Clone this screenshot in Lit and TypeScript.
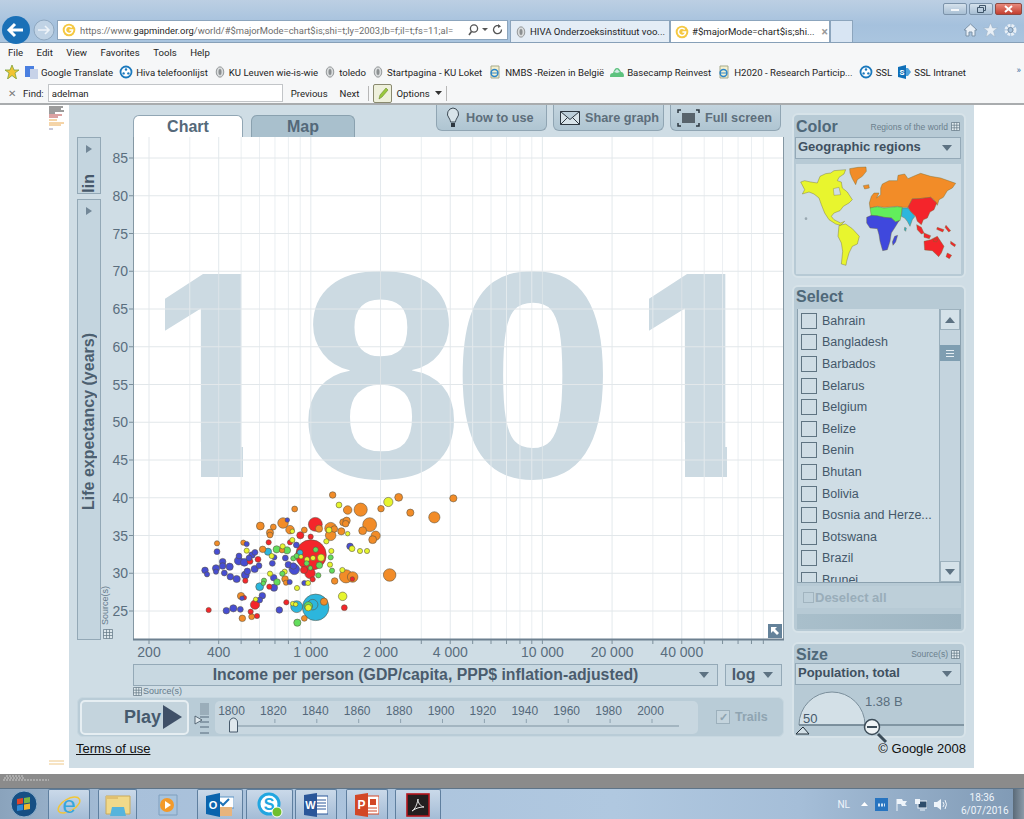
// @ts-nocheck
import {html, css, svg, LitElement} from 'lit';
import {customElement} from 'lit/decorators.js';

const BUBBLE_COLORS = {o: '#f28c28', r: '#f4252b', b: '#474ed2', y: '#e6f52e', g: '#62dd5c', c: '#2cb6dd'};

// traced in 3x zoom coordinates of the crop at (180,480)
const RAW = {
  o: [[458,45,8],[656,52,10],[820,55,9],[603,86,8],[542,89,18],[503,90,11],[691,98,9],[763,112,15],[344,87,7],[569,134,19],[309,129,14],[241,138,10],[280,141,7],[330,149,11],[373,150,7],[270,158,9],[270,165,7],[452,145,16],[463,147,8],[417,146,9],[484,154,9],[490,127,9],[500,122,9],[497,131,8],[548,152,10],[587,167,12],[578,179,10],[452,166,14],[190,188,6],[248,208,8],[306,211,6],[111,190,6],[629,285,17],[498,289,18],[518,291,14],[464,303,8],[315,297,8],[318,308,6],[183,348,9],[187,415,8],[215,410,7],[373,415,7],[432,365,9]],
  r: [[406,133,19],[361,166,9],[392,170,6],[330,187,6],[266,187,6],[393,225,44],[234,238,7],[210,244,7],[372,270,9],[390,280,14],[398,298,6],[196,302,6],[268,320,6],[225,374,12],[193,353,5],[212,395,6],[231,408,6],[86,390,6],[319,367,6],[493,383,7],[517,297,5]],
  b: [[322,120,5],[200,192,6],[111,215,7],[225,217,7],[216,225,8],[207,234,7],[177,228,7],[176,242,11],[193,247,10],[128,245,8],[128,258,8],[108,265,9],[108,275,6],[75,271,8],[81,283,6],[133,279,7],[149,260,9],[151,290,8],[170,297,9],[202,274,8],[196,285,10],[224,267,9],[237,257,7],[277,250,7],[283,232,6],[316,234,7],[349,195,7],[325,254,8],[343,268,14],[340,258,8],[281,293,8],[282,323,9],[329,306,6],[373,309,6],[247,347,8],[239,360,7],[139,392,8],[160,385,9],[181,388,7],[298,390,8],[510,199,8],[186,355,5]],
  y: [[477,75,7],[625,66,12],[337,154,5],[447,150,7],[503,161,5],[439,184,6],[337,180,6],[516,206,7],[540,213,6],[561,213,6],[454,213,6],[200,212,6],[275,228,6],[308,199,6],[363,230,5],[399,234,6],[423,233,9],[381,238,6],[450,254,6],[487,270,6],[270,281,6],[314,275,6],[351,324,6],[384,309,6],[488,349,11],[338,371,5],[347,373,5],[385,383,8],[227,358,5]],
  g: [[290,208,9],[321,211,9],[407,209,6],[340,235,6],[350,228,6],[452,232,6],[380,250,6],[418,256,8],[391,264,5],[456,272,6],[415,286,6],[307,281,6],[291,306,8],[252,302,6],[250,310,5],[352,428,9],[385,378,11]],
  c: [[407,382,38],[264,215,9],[350,380,16],[398,374,14],[239,320,10],[360,218,7]],
};

const BUBBLES = Object.entries(RAW)
  .flatMap(([k, list]) => list.map(([x, y, r]) => ({x: 180 + x / 3, y: 480 + y / 3, r: r / 3 + 0.6, fill: BUBBLE_COLORS[k]})))
  .sort((a, b) => b.r - a.r);

const COUNTRIES = ['Bahrain', 'Bangladesh', 'Barbados', 'Belarus', 'Belgium', 'Belize', 'Benin', 'Bhutan', 'Bolivia', 'Bosnia and Herze...', 'Botswana', 'Brazil', 'Brunei'];

const incomeX = (v) => 149 + 69.7 * Math.log2(v / 200);
const VLINES = [200,300,400,500,600,700,800,900,1000,2000,3000,4000,5000,6000,7000,8000,9000,10000,20000,30000,40000,50000,60000,70000,80000,90000];
const YEARS = [85,80,75,70,65,60,55,50,45,40,35,30,25];
const yearY = (v) => 158 + (85 - v) * 7.55;
const XLABELS = [[200,'200'],[400,'400'],[1000,'1 000'],[2000,'2 000'],[4000,'4 000'],[10000,'10 000'],[20000,'20 000'],[40000,'40 000']];
const TIMELINE = [1800,1820,1840,1860,1880,1900,1920,1940,1960,1980,2000];

const gridIcon = () => html`<svg class="grid-ico" viewBox="0 0 9 9" width="9" height="9"><path d="M.5.5h8v8h-8zM.5 3.2h8M.5 5.8h8M3.2.5v8M5.8.5v8" fill="#e3ecf0" stroke="#5f7482" stroke-width=".7"/></svg>`;
const caret = () => html`<svg class="caret" viewBox="0 0 10 6" width="10" height="6"><path d="M0 0h10L5 6z" fill="#5d7282"/></svg>`;
const globe = (c = '#1b79bd') => html`<svg viewBox="0 0 14 14" width="14" height="14"><circle cx="7" cy="7" r="5.5" fill="#fff" stroke=${c} stroke-width="1.8"/><circle cx="7" cy="4.5" r="1.2" fill=${c}/><circle cx="4.6" cy="8.4" r="1.2" fill=${c}/><circle cx="9.4" cy="8.4" r="1.2" fill=${c}/></svg>`;
const leaf = () => html`<svg viewBox="0 0 14 14" width="12" height="14"><ellipse cx="7" cy="7" rx="4.4" ry="6" fill="#d9dcdd" stroke="#85898b"/><ellipse cx="7" cy="7" rx="1.8" ry="3.5" fill="#8b8f91"/></svg>`;
const iePage = () => html`<svg viewBox="0 0 14 14" width="14" height="14"><path d="M3 1h8v12H3z" fill="#f4f0cf" stroke="#a6a98a"/><circle cx="6.5" cy="8" r="3.4" fill="none" stroke="#2d86c9" stroke-width="1.5"/><path d="M3 8h7" stroke="#2d86c9"/></svg>`;
const cloud = () => html`<svg viewBox="0 0 14 12" width="14" height="12"><path d="M0 10c0-2 1-3 3-3 1-3 2-5 4-5s3 2 4 4c2 0 3 2 3 4 0 1-1 1-2 1H1c-1 0-1 0-1-1z" fill="#5cc27e"/><path d="M4 6l3-3 3 3-3 1z" fill="#cfe9e4"/></svg>`;
const goldIcon = () => html`<svg viewBox="0 0 14 14" width="14" height="14"><circle cx="7" cy="7" r="6.3" fill="#f5c842"/><path d="M9.8 4.6A3.6 3.6 0 1 0 10.6 7H7.4" fill="none" stroke="#fff" stroke-width="1.6"/></svg>`;

@customElement('app-root')
export class AppRoot extends LitElement {
  static styles = css`
    :host {
      display: block;
      width: 1024px;
      height: 819px;
      overflow: hidden;
      background: #fff;
      font-family: 'Liberation Sans', Arial, sans-serif;
    }
    svg { display: block; flex: none; }

    /* browser chrome */
    .chrome { height: 105px; font-family: Roboto, 'Noto Sans', sans-serif; font-size: 9.6px; color: #1e1e1e; }
    .top { height: 43px; background: linear-gradient(#bccfe3, #a5c1dd 60%, #aac5df); border-bottom: 1px solid #87a0b8; box-sizing: border-box; }
    .win-row { height: 20px; display: flex; justify-content: flex-end; padding: 3px 2px 0 0; box-sizing: border-box; gap: 2px; }
    .win-btn { width: 24px; height: 12px; border: 1px solid #7c93aa; border-radius: 2px; background: linear-gradient(#d5e1ec, #a8bfd4); display: flex; align-items: center; justify-content: center; box-sizing: border-box; }
    .win-btn.close { width: 27px; background: linear-gradient(#e8897c, #c33f30); color: #fff; border-color: #8e4a42; }
    .nav-row { height: 22px; display: flex; align-items: stretch; position: relative; }
    .back { position: absolute; left: 2px; top: -4px; }
    .address { margin-left: 57px; width: 451px; height: 20px; background: #fff; border: 1px solid #8ca5bd; box-sizing: border-box; display: flex; align-items: center; gap: 4px; padding-left: 4px; color: #6c6c6c; white-space: nowrap; overflow: hidden; }
    .address b { font-weight: 400; color: #1f1f1f; }
    .url { width: 386px; overflow: hidden; font-size: 9.4px; }
    .tab { height: 22px; box-sizing: border-box; border: 1px solid #8ca5bd; border-bottom: 0; display: flex; align-items: center; gap: 3px; padding-left: 4px; white-space: nowrap; background: #e4edf6; overflow: hidden; }
    .tab.t1 { width: 160px; margin-left: 2px; }
    .tab.t2 { width: 160px; background: #fff; margin-left: 0; }
    .tab.t3 { width: 23px; background: #d8e5f3; }
    .tab .x { color: #9a9a9a; font-weight: 700; margin-left: 4px; font-size: 12px; line-height: 16px; }
    .tools { margin-left: auto; display: flex; gap: 5px; padding: 3px 6px 0 0; }
    .menu { height: 18px; background: #f6f7f8; display: flex; gap: 13.5px; padding-left: 8px; align-items: center; }
    .favs { height: 22px; background: #f6f7f8; display: flex; align-items: center; padding-left: 5px; white-space: nowrap; position: relative; }
    .fav { display: flex; align-items: center; gap: 3px; margin-right: 6px; }
    .more { position: absolute; right: 3px; top: 3px; color: #3f6f9f; }
    .find { height: 22px; background: #f6f7f8; border-bottom: 2px solid #a9acae; box-sizing: border-box; display: flex; align-items: center; padding-left: 8px; }
    .find .close-x { color: #7a7a7a; margin-right: 7px; font-size: 10px; }
    .find input { width: 235px; height: 18px; margin: 0 8px 0 4px; box-sizing: border-box; border: 1px solid #c2c5c8; padding: 0 3px; font: inherit; color: #1e1e1e; }
    .find-btn { margin-right: 12px; }
    .find-tool { width: 19px; height: 19px; border: 1px solid #8a8a70; border-radius: 2px; background: #eef0dc; margin: 0 4px 0 0; box-sizing: border-box; }
    .find-sep { width: 1px; height: 15px; background: #b7b7b7; margin: 0 4px 0 -3px; }
    .opts { display: flex; align-items: center; gap: 5px; }
    .opts svg { margin-right: 7px; }

    /* page */
    .page { height: 669px; display: flex; background: #fff; }
    .thumb { width: 69px; display: flex; flex-direction: column; justify-content: space-between; padding-bottom: 8px; box-sizing: border-box; }
    .thumb svg { margin: 1px 0 0 48px; }
    .app {
      width: 905px;
      height: 663px;
      background: #cfdde5;
      display: grid;
      grid-template-columns: 723px 174px;
      grid-template-rows: 634px 29px;
      color: #465a6b;
    }
    .left { display: flex; flex-direction: column; }
    .top-bar { height: 32px; display: flex; padding-left: 64px; }
    .tabs { display: flex; align-items: flex-end; gap: 8px; width: 303px; }
    .chart-tab, .map-tab { height: 22px; border-radius: 6px 6px 0 0; font-weight: 700; font-size: 16px; display: flex; align-items: center; justify-content: center; box-sizing: border-box; }
    .chart-tab { width: 110px; background: #fff; border: 1px solid #91a6b4; border-bottom: 0; color: #55697a; }
    .map-tab { width: 104px; background: #a9c0cd; border: 1px solid #8aa1af; border-bottom: 0; color: #54697a; }
    .actions { display: flex; gap: 6px; align-items: flex-start; }
    .action { width: 111px; height: 26px; background: linear-gradient(#c3d4de, #afc5d2); border: 1px solid #90a5b3; border-top: 0; border-radius: 0 0 6px 6px; box-sizing: border-box; display: flex; align-items: center; gap: 6px; padding-left: 9px; color: #5d6e7b; font-weight: 700; font-size: 12.7px; white-space: nowrap; }
    .action.wide { padding-left: 6px; gap: 5px; }
    .plot-row { height: 525px; display: flex; padding-left: 8px; }
    .axis-btns { width: 24px; display: flex; flex-direction: column; gap: 5px; }
    .axis-btn { border: 1px solid #93a8b6; background: #c4d5df; box-sizing: border-box; position: relative; display: flex; align-items: flex-end; justify-content: center; }
    .axis-btn.lin { height: 57px; font-size: 16px; font-weight: 700; color: #46586a; }
    .axis-btn.life { height: 441px; font-size: 16px; font-weight: 700; color: #4c5f70; align-items: center; }
    .vtext { writing-mode: vertical-rl; transform: rotate(180deg); white-space: nowrap; padding-bottom: 4px; }
    .axis-btn .arrow { position: absolute; top: 7px; left: 8px; }
    .plot { width: 683px; height: 525px; }
    .xrow { display: flex; gap: 7px; padding: 2px 0 0 64px; height: 24px; box-sizing: border-box; }
    .drop { background: #c8d8e1; border: 1px solid #94a9b7; box-sizing: border-box; display: flex; align-items: center; font-weight: 700; color: #4a5c6d; position: relative; }
    .drop .caret { position: absolute; right: 8px; top: 50%; margin-top: -3px; }
    .xrow .drop { height: 22px; font-size: 15.8px; justify-content: center; }
    .x-drop { width: 585px; }
    .log-drop { width: 57px; padding-right: 20px; }
    .src { display: flex; align-items: center; gap: 1px; margin-left: 64px; height: 10px; font-size: 9px; color: #64798a; }
    .play-row { margin: 1px 0 0 8px; width: 707px; height: 40px; background: #b9ccd7; border-radius: 6px; display: flex; align-items: center; padding-left: 2px; box-sizing: border-box; border: 1px solid #c7d7e0; }
    .play { width: 109px; height: 35px; border: 2px solid #e6eef2; border-radius: 5px; background: #c4d4dd; box-sizing: border-box; display: flex; align-items: center; justify-content: flex-end; gap: 2px; padding-right: 5px; font-size: 18px; font-weight: 700; color: #465a6e; }
    .speed { margin-left: 5px; }
    .timeline { width: 483px; height: 33px; margin-left: 1px; background: #c8d7e0; border-radius: 5px; }
    .trails { display: flex; align-items: center; gap: 5px; margin-left: 18px; color: #8fa4b1; font-size: 12.5px; font-weight: 700; }
    .trails i { display: block; width: 14px; height: 14px; box-sizing: border-box; border: 1px solid #9cb0bc; background: #c4d4dd; color: #8fa4b1; font-style: normal; font-size: 11px; line-height: 12px; text-align: center; }

    .right { padding-top: 8px; display: flex; flex-direction: column; gap: 7px; }
    .panel { background: #b7cad5; border: 2px solid #d7e3e9; border-radius: 6px; box-sizing: border-box; padding: 1px 3px 3px 1px; position: relative; }
    .panel.color { height: 165px; }
    .panel.select { height: 348px; }
    .panel.size { height: 96px; margin-top: 2px; }
    .head { display: flex; align-items: center; height: 21px; }
    .size .head { height: 18px; }
    .select .head { align-items: flex-start; }
    .head h2 { margin: 0 0 0 1px; font-size: 16px; line-height: 17px; color: #4f6879; font-weight: 700; }
    .head span { margin-left: auto; font-size: 8.5px; color: #6b7f8d; margin-right: 3px; }
    .head .grid-ico { margin-right: 1px; }
    .panel .drop { height: 22px; width: 166px; font-size: 13px; padding-left: 2px; align-items: flex-start; padding-top: 1px; color: #3f5060; }
    .map { margin: 5px 0 0 1px; height: 110px; width: 165px; background: #cfdde5; }
    .list-wrap { display: flex; height: 274px; width: 164px; margin: 0 0 0 2px; border: 1px solid #8ba1af; border-top: 0; box-sizing: border-box; }
    .list { width: 141px; overflow: hidden; display: grid; grid-auto-rows: 21.6px; align-content: start; padding-top: 1px; box-sizing: border-box; background: #cfdde5; }
    .row { display: flex; align-items: center; gap: 5px; padding-left: 3px; font-size: 12.5px; color: #44586a; white-space: nowrap; }
    .row i { display: block; width: 16px; height: 16px; box-sizing: border-box; border: 1px solid #5f7482; background: #cfdde5; flex: none; }
    .scroll { flex: 1; background: #c4d4de; display: flex; flex-direction: column; border-left: 1px solid #98adba; }
    .sbtn { height: 21px; background: #d5e2e9; border: 1px solid #9db1bd; box-sizing: border-box; display: flex; align-items: center; justify-content: center; }
    .sthumb { height: 16px; margin-top: 15px; background: #7f9eb1; display: flex; flex-direction: column; justify-content: center; gap: 2px; padding: 0 6px; box-sizing: border-box; }
    .sthumb b { display: block; height: 1px; background: #e4edf2; }
    .sfill { flex: 1; }
    .deselect { margin: 3px 0 0 2px; height: 22px; width: 164px; background: #bdcfd9; display: flex; align-items: center; gap: 1px; padding-left: 6px; box-sizing: border-box; font-size: 13px; font-weight: 700; color: #99adb9; }
    .deselect i { display: block; width: 11px; height: 11px; border: 1px solid #a1b4bf; box-sizing: border-box; }
    .bar { margin: 6px 0 0 2px; height: 15px; width: 164px; background: linear-gradient(90deg, #a9bfcb, #9db4c1); }
    .gauge { margin: 4px 0 0 1px; overflow: visible; }

    .foot { grid-column: 1 / 3; display: flex; justify-content: space-between; align-items: flex-end; padding: 0 0 12px 7px; font-size: 13px; color: #111; }
    .foot a { color: #111; text-decoration: underline; }

    /* taskbar */
    .strip { height: 14px; background: #8b8b8b; position: relative; }
    .strip svg { position: absolute; left: 3px; top: 1px; }
    .taskbar { height: 31px; background: linear-gradient(90deg, #8aa3bc, #a8c0da 12%, #b0c8e0 60%, #a5bed8 78%, #7f99b4 100%); border-top: 1px solid #5e7488; box-sizing: border-box; display: flex; align-items: stretch; font-family: Roboto, 'Noto Sans', sans-serif; }
    .orb { width: 48px; display: flex; align-items: center; justify-content: center; }
    .task { display: flex; align-items: center; justify-content: center; box-sizing: border-box; border: 1px solid #5f7f9f; border-bottom: 0; border-radius: 2px 2px 0 0; background: linear-gradient(#cad9e9, #a4bcd6); }
    .task.plain { background: transparent; border-color: transparent; }
    .t-ie { width: 42px; margin-right: 8px; }
    .t-ex { width: 39px; margin-right: 8px; }
    .t-me { width: 45px; margin-right: 7px; }
    .t-ou { width: 46px; margin-right: 3px; }
    .t-sk { width: 47px; margin-right: 2px; }
    .t-wo { width: 42px; margin-right: 9px; }
    .t-pp { width: 42px; margin-right: 7px; }
    .t-ac { width: 46px; }
    .tray { margin-left: auto; display: flex; align-items: center; color: #eef4fa; font-size: 10px; }
    .nl { margin-right: 11px; }
    .tray-ico { display: flex; align-items: center; gap: 7px; margin-right: 14px; }
    .clock { text-align: center; line-height: 13px; width: 42px; margin-right: 10px; }
    .show { width: 11px; background: linear-gradient(90deg, #5a6a78, #8b9aa8); align-self: stretch; }
  `;

  renderChart() {
    return html`
      <svg class="plot" viewBox="101 137 683 525" font-family="Liberation Sans, Arial, sans-serif">
        <defs>
          <clipPath id="one-a"><path d="M165 260H243V480H201V442H165z"/></clipPath>
          <clipPath id="one-b"><path d="M649 260H727V480H685V442H649z"/></clipPath>
        </defs>
        <rect x="133" y="137" width="651" height="503" fill="#fff"/>
        <g font-size="295" font-weight="700" fill="#ccdae2">
          <text x="132" y="477" clip-path="url(#one-a)">1</text>
          <text x="299" y="477">8</text>
          <text x="451" y="477">0</text>
          <text x="616" y="477" clip-path="url(#one-b)">1</text>
        </g>
        ${VLINES.map((v) => svg`<line x1=${incomeX(v)} x2=${incomeX(v)} y1="137" y2="640" stroke=${[200,400,1000,2000,4000,10000,20000,40000].includes(v) ? '#dfe6ea' : '#e8edf0'} stroke-width="1" opacity=".85"/>`)}
        ${YEARS.map((v) => svg`
          <line x1="133" x2="784" y1=${yearY(v)} y2=${yearY(v)} stroke="#e2e7ea"/>
          <line x1="129" x2="133" y1=${yearY(v)} y2=${yearY(v)} stroke="#7c8f9b"/>
          <text x="128" y=${yearY(v) + 5} font-size="14" fill="#5a6e7e" text-anchor="end">${v}</text>`)}
        <path d="M133.5 137V640M783.5 137V640" stroke="#8497a3" fill="none"/>
        <path d="M133 639.5H784" stroke="#6d8090" stroke-width="2"/>
        ${VLINES.map((v) => svg`<line x1=${incomeX(v)} x2=${incomeX(v)} y1="640" y2="644" stroke="#7c8f9b"/>`)}
        ${XLABELS.map(([v, t]) => svg`<text x=${incomeX(v)} y="657" font-size="14" fill="#5a6e7e" text-anchor="middle">${t}</text>`)}
        ${BUBBLES.map((b) => svg`<circle cx=${b.x} cy=${b.y} r=${b.r} fill=${b.fill} stroke="#5a5240" stroke-width=".7" stroke-opacity=".8"/>`)}
        <text transform="translate(108 625) rotate(-90)" font-size="9" fill="#64798a">Source(s)</text>
        <path d="M103.5 629.5h9v9h-9zM103.5 632.5h9M103.5 635.5h9M106.5 629.5v9M109.5 629.5v9" fill="#dde7ec" stroke="#5f7482" stroke-width=".7"/>
        <rect x="768" y="624" width="14" height="14" fill="#64829a"/>
        <path d="M771 627h6l-2 2 4 4-2 2-4-4-2 2z" fill="#fff"/>
      </svg>`;
  }

  renderMap() {
    return html`
      <svg viewBox="36 178 495 330" width="165" height="110">
        <g stroke="#6f6a30" stroke-width="1.2" stroke-linejoin="round">
          <path fill="#e8f52e" d="M50 232L62 228 80 232 100 235 108 215 125 207 140 205 150 198 185 195 180 208 165 218 160 228 172 232 175 250 190 262 205 285 195 295 178 305 168 318 150 325 142 335 150 345 170 355 182 350 170 362 155 358 135 345 122 325 112 300 105 280 90 268 75 262 55 268 62 255ZM165 362L185 358 205 372 226 395 220 418 205 425 195 445 188 470 186 482 172 478 176 440 172 415 162 395Z"/>
          <path fill="#f28c28" d="M197 192L222 188 246 187 247 200 235 215 220 225 215 240 205 222 198 205ZM238 243L254 240 256 250 242 253ZM258 310L256 295 262 275 270 265 285 265 278 280 290 270 290 250 295 238 315 228 340 228 342 212 362 208 372 222 395 212 410 206 440 215 470 220 515 236 505 250 490 258 478 278 465 285 460 302 450 285 440 278 405 282 385 282 372 308 355 308 340 305 300 308 280 305Z"/>
          <path fill="#62ee5c" d="M258 310L280 306 300 310 340 306 355 308 352 330 348 348 335 352 322 340 300 338 280 335 262 335Z"/>
          <path fill="#3f48dd" d="M262 332L280 333 300 338 322 340 335 352 345 348 335 365 322 385 318 410 310 435 296 438 288 410 285 390 280 372 258 370 248 355 248 338ZM332 395L341 392 335 412 327 422 325 412Z"/>
          <path fill="#2cb6dd" d="M355 310L372 310 380 320 393 335 385 345 378 365 370 350 362 340 352 335ZM362 368L367 370 365 380 361 376Z"/>
          <path fill="#f4252b" d="M372 308L385 283 405 282 440 278 458 295 450 315 438 322 430 340 418 345 412 360 400 350 395 335 380 320ZM398 360L412 368 420 385 412 388 400 375ZM420 385L440 393 436 402 420 398ZM460 368L480 375 476 382 458 374ZM486 362L500 378 494 382 483 368ZM420 410L440 405 460 395 470 410 480 425 472 445 464 456 445 438 422 436ZM490 445L503 452 496 462 486 456ZM500 410L515 420 512 426 500 418ZM450 402L462 404 458 412 448 410Z"/>
        </g>
        <path d="M148 252L165 248 170 270 150 272Z" fill="#cfdde5" stroke="#6f6a30"/>
        <circle cx="66" cy="342" r="4" fill="#9aa9b2"/>
      </svg>`;
  }

  render() {
    return html`
      <div class="chrome">
        <div class="top">
          <div class="win-row">
            <div class="win-btn"><svg width="8" height="3"><rect width="8" height="2" y="1" fill="#f4f7fa"/></svg></div>
            <div class="win-btn"><svg width="9" height="8"><path d="M.5 2.5h6v5h-6zM2.5 2V.5h6v5H7" fill="none" stroke="#40566b"/></svg></div>
            <div class="win-btn close"><svg width="9" height="8"><path d="M1 1l7 6M8 1L1 7" stroke="#fff" stroke-width="2"/></svg></div>
          </div>
          <div class="nav-row">
            <svg class="back" width="54" height="30" viewBox="0 0 54 30">
              <circle cx="42" cy="14" r="10" fill="#c0d3e5" stroke="#8fa8c0"/>
              <path d="M36 14h11M43 10l4 4-4 4" fill="none" stroke="#eef4f9" stroke-width="1.6"/>
              <circle cx="14" cy="14" r="14" fill="#1a70b7"/>
              <path d="M7 14h14M13 8l-6 6 6 6" fill="none" stroke="#fff" stroke-width="3"/>
            </svg>
            <div class="address">
              ${goldIcon()}
              <div class="url">https://www.<b>gapminder.org</b>/world/#$majorMode=chart$is;shi=t;ly=2003;lb=f;il=t;fs=11;al=</div>
              <svg width="40" height="14" viewBox="0 0 40 14"><circle cx="7" cy="5.5" r="3.6" fill="none" stroke="#555" stroke-width="1.3"/><path d="M4.5 8.5L2 12" stroke="#555" stroke-width="1.6"/><path d="M15 5h6l-3 3z" fill="#555"/><path d="M33 3.5a4 4 0 1 0 1.5 3" fill="none" stroke="#555" stroke-width="1.3"/><path d="M31 1l3 2.500-3 1.500z" fill="#555"/></svg>
            </div>
            <div class="tab t1">${leaf()}<span>HIVA Onderzoeksinstituut voo...</span></div>
            <div class="tab t2">${goldIcon()}<span>#$majorMode=chart$is;shi...</span><span class="x">×</span></div>
            <div class="tab t3"></div>
            <div class="tools">
              <svg width="15" height="14" viewBox="0 0 15 14"><path d="M1 7l6.500-6L14 7h-2v6H9V9H6v4H3V7z" fill="#e8eff6" stroke="#7d93a8"/></svg>
              <svg width="15" height="14" viewBox="0 0 15 14"><path d="M7.500 0l2 5h5l-4 3 1.500 6-4.500-3.500L3 14l1.500-6-4-3h5z" fill="#e8eff6" stroke="#9db1c4" stroke-width=".5"/></svg>
              <svg width="15" height="14" viewBox="0 0 15 14"><circle cx="7.500" cy="7" r="4.500" fill="none" stroke="#e8eff6" stroke-width="3" stroke-dasharray="2.600 1"/><circle cx="7.500" cy="7" r="2.500" fill="none" stroke="#7d93a8"/></svg>
            </div>
          </div>
        </div>
        <div class="menu"><span>File</span><span>Edit</span><span>View</span><span>Favorites</span><span>Tools</span><span>Help</span></div>
        <div class="favs">
          <div class="fav"><svg width="14" height="14" viewBox="0 0 14 14"><path d="M7 0l2 5h5l-4 3 1.500 6L7 10.500 2.500 14 4 8 0 5h5z" fill="#f2c433" stroke="#7ca33a" stroke-width=".8"/></svg></div>
          <div class="fav"><svg width="13" height="13" viewBox="0 0 13 13"><rect width="9" height="11" fill="#4a7fe0"/><rect x="5" y="3" width="8" height="10" fill="#c7d2e8"/></svg><span>Google Translate</span></div>
          <div class="fav">${globe()}<span>Hiva telefoonlijst</span></div>
          <div class="fav">${leaf()}<span>KU Leuven wie-is-wie</span></div>
          <div class="fav">${leaf()}<span>toledo</span></div>
          <div class="fav">${leaf()}<span>Startpagina - KU Loket</span></div>
          <div class="fav">${iePage()}<span>NMBS -Reizen in België</span></div>
          <div class="fav">${cloud()}<span>Basecamp Reinvest</span></div>
          <div class="fav">${iePage()}<span>H2020 - Research Particip...</span></div>
          <div class="fav">${globe()}<span>SSL</span></div>
          <div class="fav"><svg width="13" height="14" viewBox="0 0 13 14"><path d="M0 2l8-2v14l-8-2z" fill="#0f6fb8"/><path d="M8 3h2l3 4-3 4H8z" fill="#4fa3dc"/><text x="1.500" y="10" font-size="8" font-weight="700" fill="#fff">S</text></svg><span>SSL Intranet</span></div>
          <span class="more">»</span>
        </div>
        <div class="find">
          <span class="close-x">✕</span><span>Find:</span>
          <input .value=${'adelman'} />
          <span class="find-btn">Previous</span><span class="find-btn">Next</span>
          <span class="find-sep"></span>
          <span class="find-tool"><svg width="17" height="17" viewBox="0 0 17 17"><path d="M5 14l1-4 6-7 2 2-6 7z" fill="#9ac93c" stroke="#6c8a2d" stroke-width=".6"/></svg></span>
          <span class="opts">Options <svg width="7" height="4"><path d="M0 0h7L3.500 4z" fill="#333"/></svg></span>
          <span class="find-sep"></span>
        </div>
      </div>

      <div class="page">
        <div class="thumb">
          <svg width="18" height="30" viewBox="0 0 18 30">
            <path d="M1 1h14M1 3h12M1 5h15M1 7h6" stroke="#222" stroke-width=".9"/>
            <path d="M1 9h13M1 11h9" stroke="#b03030" stroke-width=".9"/>
            <path d="M1 14h8M1 17h15M1 19h12" stroke="#e8a040" stroke-width=".9"/>
            <path d="M1 23h4" stroke="#88a" stroke-width=".9"/>
          </svg>
          <svg width="18" height="6" viewBox="0 0 18 6"><path d="M1 1h15M1 4h15" stroke="#ecc27a" stroke-width=".9"/></svg>
        </div>
        <div class="app">
          <div class="left">
            <div class="top-bar">
              <div class="tabs"><div class="chart-tab">Chart</div><div class="map-tab">Map</div></div>
              <div class="actions">
                <div class="action">
                  <svg width="14" height="22" viewBox="0 0 14 22"><path d="M7 1a6 6 0 0 0-4 10c1 1.500 1.500 3 1.500 4h5c0-1 .5-2.500 1.500-4A6 6 0 0 0 7 1z" fill="#d8e4ea" stroke="#3d4a55"/><path d="M5 16h4v4H5z" fill="#2d3740"/></svg>
                  How to use
                </div>
                <div class="action wide">
                  <svg width="20" height="14" viewBox="0 0 20 14"><path d="M.5.500h19v13H.5zM.5.500l9.500 8 9.500-8M.5 13.500l7-7M19.500 13.500l-7-7" fill="#d8e4ea" stroke="#2d3740"/></svg>
                  Share graph
                </div>
                <div class="action wide">
                  <svg width="23" height="18" viewBox="0 0 23 18"><rect x="5" y="4" width="13" height="10" fill="#58636c"/><path d="M1 4V1h3M19 1h3v3M1 14v3h3M22 14v3h-3" fill="none" stroke="#2d3740" stroke-width="1.500"/></svg>
                  Full screen
                </div>
              </div>
            </div>
            <div class="plot-row">
              <div class="axis-btns">
                <div class="axis-btn lin"><svg class="arrow" width="6" height="8"><path d="M0 0l6 4-6 4z" fill="#728797"/></svg><span class="vtext">lin</span></div>
                <div class="axis-btn life"><svg class="arrow" width="6" height="8"><path d="M0 0l6 4-6 4z" fill="#728797"/></svg><span class="vtext">Life expectancy (years)</span></div>
              </div>
              ${this.renderChart()}
            </div>
            <div class="xrow">
              <div class="drop x-drop">Income per person (GDP/capita, PPP$ inflation-adjusted)${caret()}</div>
              <div class="drop log-drop">log${caret()}</div>
            </div>
            <div class="src">${gridIcon()}<span>Source(s)</span></div>
            <div class="play-row">
              <div class="play">Play<svg width="19" height="24" viewBox="0 0 19 24"><path d="M0 0l19 12L0 24z" fill="#3f5068"/></svg></div>
              <svg class="speed" width="20" height="33" viewBox="0 0 20 33">
                <path d="M6 3h9M6 5h9M6 7h9M6 9h9M6 11h9M6 13h9" stroke="#7c8f9d"/>
                <path d="M6 16h9M6 21h9M6 26h9M6 32h9" stroke="#54687a"/>
                <path d="M1 15v8l7-4z" fill="#dfe8ed" stroke="#3f5060" stroke-width=".8"/>
              </svg>
              <svg class="timeline" viewBox="215 702 483 33" font-family="Liberation Sans, Arial, sans-serif">
                ${TIMELINE.map((y, i) => svg`
                  <text x=${231.5 + i * 41.9} y="716" font-size="12" fill="#54687a" text-anchor="middle">${y}</text>
                  <line x1=${233 + i * 41.9} x2=${233 + i * 41.9} y1="720" y2="724" stroke="#8ea2af"/>`)}
                <line x1="233" x2="679" y1="727" y2="727" stroke="#7e93a1"/>
                <path d="M229.500 733v-10c0-2 2-4 4-4s4 2 4 4v10z" fill="#dfe8ed" stroke="#46596a"/>
              </svg>
              <div class="trails"><i>✓</i><span>Trails</span></div>
            </div>
          </div>
          <div class="right">
            <div class="panel color">
              <div class="head"><h2>Color</h2><span>Regions of the world</span>${gridIcon()}</div>
              <div class="drop">Geographic regions${caret()}</div>
              <div class="map">${this.renderMap()}</div>
            </div>
            <div class="panel select">
              <div class="head"><h2>Select</h2></div>
              <div class="list-wrap">
                <div class="list">
                  ${COUNTRIES.map((c) => html`<div class="row"><i></i><span>${c}</span></div>`)}
                </div>
                <div class="scroll">
                  <div class="sbtn"><svg width="10" height="6"><path d="M0 6h10L5 0z" fill="#5d7282"/></svg></div>
                  <div class="sthumb"><b></b><b></b><b></b></div>
                  <div class="sfill"></div>
                  <div class="sbtn">${caret()}</div>
                </div>
              </div>
              <div class="deselect"><i></i><span>Deselect all</span></div>
              <div class="bar"></div>
            </div>
            <div class="panel size">
              <div class="head"><h2>Size</h2><span>Source(s)</span>${gridIcon()}</div>
              <div class="drop">Population, total${caret()}</div>
              <svg class="gauge" width="168" height="48" viewBox="796 689 168 48" font-family="Liberation Sans, Arial, sans-serif">
                <path d="M799 725a33 33 0 0 1 66 0z" fill="#d3e0e7" stroke="#7b8f9c"/>
                <line x1="799" x2="964" y1="725" y2="725" stroke="#6f8492" stroke-width="1.500"/>
                <text x="803" y="723" font-size="13" fill="#465a6b">50</text>
                <text x="865" y="706" font-size="13" fill="#5a6e7e">1.38 B</text>
                <path d="M803 727l6 7h-13z" fill="#d3e0e7" stroke="#22303a"/>
                <path d="M886 742l-8-8" stroke="#3c4c58" stroke-width="3"/>
                <circle cx="872" cy="727" r="7.500" fill="#eef3f5" stroke="#3c4c58" stroke-width="1.500"/>
                <line x1="867" x2="877" y1="727" y2="727" stroke="#3c4c58" stroke-width="2"/>
              </svg>
            </div>
          </div>
          <div class="foot"><a>Terms of use</a><span>© Google 2008</span></div>
        </div>
      </div>

      <div class="strip">
        <svg width="48" height="7" viewBox="0 0 48 7"><path d="M3 1h18M1 3h20M0 5h46" stroke="#e8e8e8" stroke-width=".7" stroke-dasharray="2 1"/></svg>
      </div>
      <div class="taskbar">
        <div class="orb">
          <svg width="28" height="28" viewBox="0 0 28 28">
            <circle cx="14" cy="14" r="13" fill="#164f84" stroke="#8fb0cc"/>
            <path d="M7 9l6-1v5.500l-6 1z" fill="#e0442a"/><path d="M14 8l6-1v5.500l-6 1z" fill="#7ab642"/>
            <path d="M7 15.500l6-1V20l-6 1z" fill="#2e8ad8"/><path d="M14 14.500l6-1V19l-6 1z" fill="#f1b62c"/>
          </svg>
        </div>
        <div class="task t-ie"><svg width="26" height="26" viewBox="0 0 26 26"><ellipse cx="13" cy="13" rx="12" ry="6" fill="none" stroke="#f2c636" stroke-width="1.500" transform="rotate(-30 13 13)"/><text x="13" y="21" font-family="Liberation Sans" font-size="24" fill="#36a6dc" text-anchor="middle">e</text></svg></div>
        <div class="task t-ex"><svg width="28" height="24" viewBox="0 0 28 24"><path d="M2 3h24v18H2z" fill="#f1d98a" stroke="#c9a95a"/><path d="M2 3h12v3H2z" fill="#e0c070"/><path d="M8 14h12l2 9H6z" fill="#56b4dc"/></svg></div>
        <div class="task plain t-me"><svg width="24" height="24" viewBox="0 0 24 24"><path d="M3 2h18v20H3z" fill="#a7c3dd" stroke="#7e9fbe"/><circle cx="11" cy="12" r="7" fill="#f39a2a"/><path d="M9 8l6 4-6 4z" fill="#fff"/></svg></div>
        <div class="task t-ou"><svg width="28" height="24" viewBox="0 0 28 24"><rect x="12" y="4" width="16" height="11" fill="#fff" stroke="#5b93c6"/><path d="M14 9l3 3 6-6" stroke="#1e72b8" stroke-width="2" fill="none"/><path d="M12 14h14v9H12z" fill="#e8b47c"/><path d="M0 3l14-3v24L0 21z" fill="#0a64ad"/><text x="7" y="16" font-size="11" font-weight="700" fill="#fff" text-anchor="middle" font-family="Liberation Sans">O</text></svg></div>
        <div class="task t-sk"><svg width="28" height="26" viewBox="0 0 28 26"><circle cx="13" cy="12" r="10" fill="#fff" stroke="#22a6e0" stroke-width="3"/><text x="13" y="18" font-size="16" font-weight="700" fill="#22a6e0" text-anchor="middle" font-family="Liberation Sans">S</text><circle cx="21" cy="20" r="5" fill="#6fbf2e" stroke="#fff"/></svg></div>
        <div class="task t-wo"><svg width="24" height="24" viewBox="0 0 24 24"><path d="M10 3h14v18H10z" fill="#fff" stroke="#2a5699"/><path d="M13 7h9M13 10h9M13 13h9M13 16h9" stroke="#2a5699"/><path d="M0 2l13-2v24L0 22z" fill="#2a5699"/><text x="6.500" y="16" font-size="11" font-weight="700" fill="#fff" text-anchor="middle" font-family="Liberation Sans">W</text></svg></div>
        <div class="task t-pp"><svg width="24" height="24" viewBox="0 0 24 24"><path d="M10 3h14v18H10z" fill="#fff" stroke="#d24726"/><path d="M15 6h6v6h-6z" fill="#d24726"/><path d="M13 15h9M13 18h9" stroke="#d24726"/><path d="M0 2l13-2v24L0 22z" fill="#d24726"/><text x="6.500" y="16" font-size="12" font-weight="700" fill="#fff" text-anchor="middle" font-family="Liberation Sans">P</text></svg></div>
        <div class="task t-ac"><svg width="24" height="24" viewBox="0 0 24 24"><rect x="1" y="1" width="22" height="22" fill="#231f20" stroke="#b3141c" stroke-width="1.600"/><path d="M6 18c3-2 5-6 6-12 0 4 2 7 6 8-4 0-8 1-12 4z" fill="none" stroke="#e5e5e5"/></svg></div>
        <div class="tray">
          <span class="nl">NL</span>
          <div class="tray-ico">
            <svg width="7" height="4"><path d="M0 4h7L3.500 0z" fill="#fff"/></svg>
            <svg width="13" height="13" viewBox="0 0 13 13"><rect width="13" height="13" fill="#2774c0"/><path d="M3 7h7" stroke="#cfe3f6" stroke-width="3" stroke-dasharray="2 1"/></svg>
            <svg width="12" height="13" viewBox="0 0 12 13"><path d="M2 1v12" stroke="#eef4fa"/><path d="M2 1h5l1 2h4l-2 3 2 2H7L6 6H2z" fill="#eef4fa"/></svg>
            <svg width="13" height="13" viewBox="0 0 13 13"><rect x="4" y="3" width="9" height="7" fill="#2e4c6a" stroke="#eef4fa"/><rect x="1" y="1" width="5" height="5" fill="#eef4fa"/><path d="M6 12h5" stroke="#eef4fa"/></svg>
            <svg width="13" height="13" viewBox="0 0 13 13"><path d="M0 4h3l4-3v11L3 9H0z" fill="#eef4fa"/><path d="M9 4q2 2.500 0 5M11 2q3 4.500 0 9" stroke="#eef4fa" fill="none"/></svg>
          </div>
          <div class="clock">18:36<br />6/07/2016</div>
          <div class="show"></div>
        </div>
      </div>
    `;
  }
}
